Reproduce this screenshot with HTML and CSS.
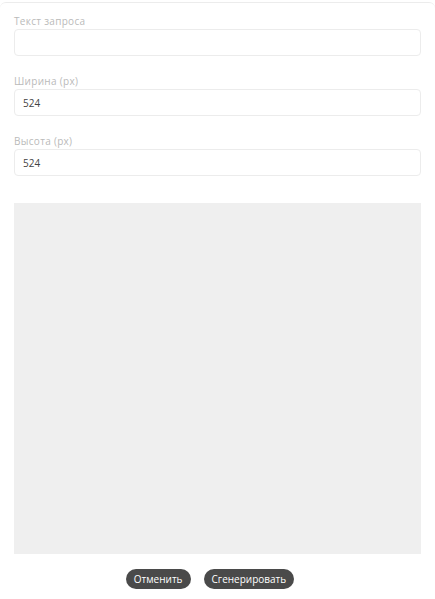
FILE: index.html
```html
<!DOCTYPE html>
<html lang="ru">
<head>
<meta charset="utf-8">
<title>Генерация изображения</title>
<link rel="stylesheet" href="styles.css">
</head>
<body>
<div class="modal">
  <div class="field">
    <label class="label">Текст запроса</label>
    <input class="input" type="text" value="">
  </div>
  <div class="field">
    <label class="label">Ширина (px)</label>
    <input class="input" type="text" value="524">
  </div>
  <div class="field">
    <label class="label">Высота (px)</label>
    <input class="input" type="text" value="524">
  </div>
  <div class="preview"></div>
  <div class="actions">
    <button class="btn">Отменить</button>
    <button class="btn">Сгенерировать</button>
  </div>
</div>
</body>
</html>
```
FILE: styles.css
```css
html, body {
  margin: 0;
  padding: 0;
  background: #ffffff;
}
body {
  padding-top: 2px;
  font-family: "Open Sans", "Liberation Sans", sans-serif;
}
.modal {
  background: #ffffff;
  border-top: 1px solid #ececec;
  border-radius: 6px 6px 0 0;
  padding: 12px 14px 0 14px;
  display: flex;
  flex-direction: column;
}
.field {
  display: flex;
  flex-direction: column;
  gap: 2px;
  margin-bottom: 19px;
}
.label {
  font-size: 10px;
  line-height: 12px;
  letter-spacing: 0.3px;
  color: #bababa;
}
.input {
  box-sizing: border-box;
  height: 27px;
  width: 100%;
  border: 1px solid #ececec;
  border-radius: 4px;
  padding: 0 8px;
  font-family: inherit;
  font-size: 10px;
  color: #444444;
  outline: none;
  background: #fff;
}
.preview {
  margin-top: 8px;
  height: 351px;
  background: #efefef;
}
.actions {
  display: flex;
  justify-content: center;
  gap: 13px;
  padding: 15px 15px 10px 0;
}
.btn {
  height: 20px;
  border: none;
  border-radius: 10px;
  background: #4a4a4a;
  color: #ffffff;
  font-family: inherit;
  font-size: 10px;
  padding: 0 8px;
  cursor: pointer;
}
```
